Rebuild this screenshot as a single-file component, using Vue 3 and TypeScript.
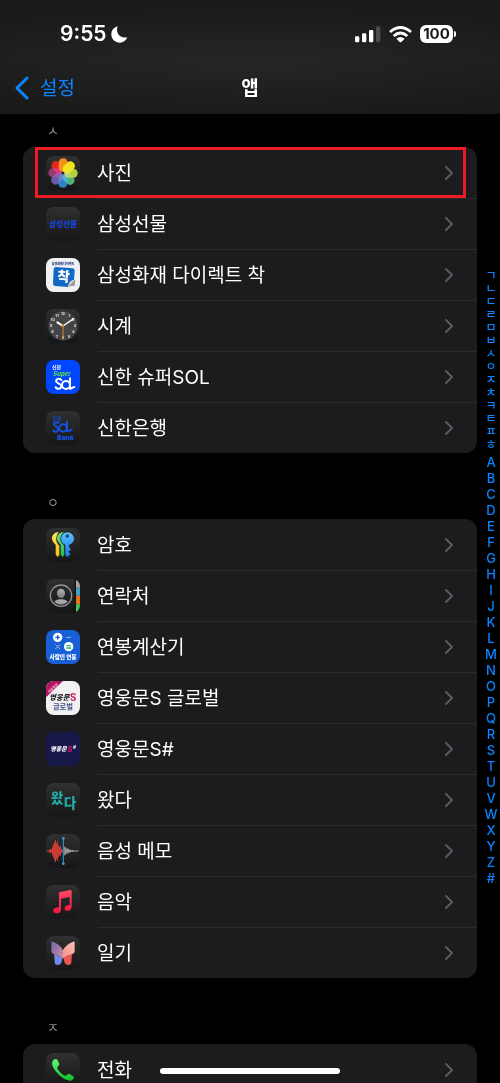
<script setup lang="ts">
interface AppEntry {
  name: string
  icon: string
  highlighted?: boolean
}

interface Section {
  letter: string
  apps: AppEntry[]
}

const sections: Section[] = [
  {
    letter: 'ㅅ',
    apps: [
      { name: '사진', icon: 'photos', highlighted: true },
      { name: '삼성선물', icon: 'futures' },
      { name: '삼성화재 다이렉트 착', icon: 'direct' },
      { name: '시계', icon: 'clock' },
      { name: '신한 슈퍼SOL', icon: 'supersol' },
      { name: '신한은행', icon: 'solbank' },
    ],
  },
  {
    letter: 'ㅇ',
    apps: [
      { name: '암호', icon: 'passwords' },
      { name: '연락처', icon: 'contacts' },
      { name: '연봉계산기', icon: 'salary' },
      { name: '영웅문S 글로벌', icon: 'heroglobal' },
      { name: '영웅문S#', icon: 'herosharp' },
      { name: '왔다', icon: 'watda' },
      { name: '음성 메모', icon: 'voice' },
      { name: '음악', icon: 'music' },
      { name: '일기', icon: 'journal' },
    ],
  },
  {
    letter: 'ㅈ',
    apps: [{ name: '전화', icon: 'phone' }],
  },
]

const hangulIndex = [...'ㄱㄴㄷㄹㅁㅂㅅㅇㅈㅊㅋㅌㅍㅎ']
const latinIndex = [...'ABCDEFGHIJKLMNOPQRSTUVWXYZ#']

const petals = ['#f7901e', '#f3e31d', '#b4d335', '#4fb274', '#2f7fcb', '#6b5cab', '#96396f', '#e3261b']

const clockNumbers = Array.from({ length: 12 }, (_, i) => {
  const angle = ((i + 1) * Math.PI) / 6
  return { label: i + 1, x: Math.round(51 + 36 * Math.sin(angle)), y: Math.round(55 - 36 * Math.cos(angle)) }
})

const redBars = [4, 4, 8, 14, 10, 26, 40, 56, 66, 48, 58, 36, 24, 30, 14, 8]
const whiteBars = [26, 20, 12, 16, 8, 10, 6, 4, 6, 3, 3, 3, 3, 3]

const plainFills: Record<string, string> = {
  direct: '#f1f1f3',
  supersol: '#0046ff',
  salary: '#175fd6',
  heroglobal: '#f1f1f1',
  herosharp: '#18194b',
}

function tileFill(icon: string): string {
  return plainFills[icon] ?? 'url(#tile)'
}
</script>

<template>
  <div class="screen">
    <svg class="defs" aria-hidden="true">
      <defs>
        <linearGradient id="tile" x1="0" y1="0" x2="0" y2="1">
          <stop offset="0" stop-color="#303031" />
          <stop offset="1" stop-color="#161617" />
        </linearGradient>
        <linearGradient id="musicRed" x1="0" y1="0" x2="0" y2="1">
          <stop offset="0" stop-color="#fb4a63" />
          <stop offset="1" stop-color="#fa1340" />
        </linearGradient>
        <linearGradient id="phoneGreen" x1="0" y1="0" x2="0" y2="1">
          <stop offset="0" stop-color="#5ff777" />
          <stop offset="1" stop-color="#0cc12b" />
        </linearGradient>
        <linearGradient id="keyBlue" x1="0" y1="0" x2="0" y2="1">
          <stop offset="0" stop-color="#62bdf8" />
          <stop offset="1" stop-color="#0f7cf0" />
        </linearGradient>
        <linearGradient id="keyGreen" x1="0" y1="0" x2="0" y2="1">
          <stop offset="0" stop-color="#6be07a" />
          <stop offset="1" stop-color="#25b84c" />
        </linearGradient>
        <linearGradient id="keyYellow" x1="0" y1="0" x2="0" y2="1">
          <stop offset="0" stop-color="#ffe25c" />
          <stop offset="1" stop-color="#fbbd13" />
        </linearGradient>
        <linearGradient id="wingLeft" x1="0" y1="0" x2="1" y2="1">
          <stop offset="0" stop-color="#6a67b3" />
          <stop offset="1" stop-color="#d38f9b" />
        </linearGradient>
        <linearGradient id="wingRight" x1="1" y1="0" x2="0" y2="1">
          <stop offset="0" stop-color="#ffc4b4" />
          <stop offset="1" stop-color="#f58d8b" />
        </linearGradient>
        <linearGradient id="person" x1="0" y1="0" x2="0" y2="1">
          <stop offset="0" stop-color="#b0b0b5" />
          <stop offset="1" stop-color="#7b7b80" />
        </linearGradient>
        <clipPath id="tileClip"><rect width="102" height="102" rx="23" /></clipPath>
        <clipPath id="personClip"><circle cx="45" cy="50" r="27" /></clipPath>
      </defs>
    </svg>

    <header class="top">
      <div class="status">
        <div class="clock">
          <span>9:55</span>
          <svg width="17" height="17" viewBox="0 0 51 51" aria-label="방해금지 모드">
            <path d="M20 1C13 20 26 39 49 34C44 45 36 50 27 50C12 50 1 39 1 25C1 14 8 4 20 1Z" fill="#fff" />
          </svg>
        </div>
        <div class="signals">
          <svg width="26" height="17" viewBox="0 0 78 51" aria-label="셀룰러 신호">
            <rect x="0" y="31" width="13" height="18" rx="4" fill="#fff" />
            <rect x="21" y="22" width="13" height="27" rx="4" fill="#fff" />
            <rect x="42" y="12" width="13" height="37" rx="4" fill="#fff" />
            <rect x="63" y="1" width="13" height="48" rx="4" fill="#4c4c4e" />
          </svg>
          <svg width="23" height="17" viewBox="0 0 69 51" aria-label="Wi-Fi">
            <g fill="none" stroke="#fff" stroke-width="8">
              <path d="M3 18Q34 -9 66 18" />
              <path d="M14 30Q34 12 55 30" />
            </g>
            <path d="M22 38Q34 28 47 38L37 48Q34 50 32 48Z" fill="#fff" />
          </svg>
          <div class="battery">
            <span class="level">100</span>
            <span class="cap"></span>
          </div>
        </div>
      </div>
      <nav class="bar">
        <a href="#settings" class="back">
          <svg width="14" height="24" viewBox="0 0 14 24" aria-hidden="true">
            <path d="M12 2L2 12L12 22" fill="none" stroke="#0a84ff" stroke-width="3" stroke-linecap="round" stroke-linejoin="round" />
          </svg>
          <span class="label">설정</span>
        </a>
        <h1 class="label">앱</h1>
      </nav>
    </header>

    <main class="content">
      <section v-for="section in sections" :key="section.letter" class="section">
        <h2>{{ section.letter }}</h2>
        <ul class="card">
          <li v-for="app in section.apps" :key="app.name" :class="{ highlighted: app.highlighted }">
            <a class="row" :href="'#' + app.icon">
              <svg class="icon" viewBox="0 0 102 102" aria-hidden="true">
                <rect width="102" height="102" rx="23" :fill="tileFill(app.icon)" />

                <g v-if="app.icon === 'photos'" class="flower">
                  <rect
                    v-for="(color, i) in petals"
                    :key="color"
                    x="38"
                    y="7"
                    width="27"
                    height="40"
                    rx="13"
                    :fill="color"
                    :transform="`rotate(${i * 45} 51 51)`"
                  />
                </g>

                <text v-else-if="app.icon === 'futures'" x="51" y="60" font-size="23" class="mid black" fill="#1745dc">삼성선물</text>

                <g v-else-if="app.icon === 'direct'">
                  <text x="51" y="21" font-size="9" class="mid black" fill="#18327c">삼성화재 다이렉트</text>
                  <path d="M64 88L88 64L86 84Q76 82 64 88Z" fill="#9b9a98" />
                  <path d="M30 27L80 31Q87 32 86 39L84 66Q70 68 66 87L27 84Q20 83 21 76L23 34Q24 27 30 27Z" fill="#1268c4" />
                  <path d="M84 66Q70 67 66 87Q73 78 84 66Z" fill="#d9d5d0" />
                  <text x="53" y="70" font-size="41" class="mid black" fill="#fff" transform="rotate(4 53 57)">착</text>
                </g>

                <g v-else-if="app.icon === 'clock'">
                  <circle cx="51" cy="51" r="44" fill="#454547" />
                  <text
                    v-for="mark in clockNumbers"
                    :key="mark.label"
                    :x="mark.x"
                    :y="mark.y"
                    font-size="12"
                    class="mid heavy"
                    fill="#dcdcdc"
                  >{{ mark.label }}</text>
                  <path d="M51 51L34 40" stroke="#fff" stroke-width="6" stroke-linecap="round" />
                  <path d="M51 51L83 29" stroke="#fff" stroke-width="4" stroke-linecap="round" />
                  <path d="M51 45V90" stroke="#d68b2d" stroke-width="3" />
                  <circle cx="51" cy="51" r="4" fill="#d68b2d" />
                </g>

                <g v-else-if="app.icon === 'supersol'">
                  <text x="18" y="28" font-size="15" class="heavy" fill="#fff">신한</text>
                  <text x="22" y="47" font-size="18" class="heavy slant" fill="#5be04e">Super</text>
                  <g fill="none" stroke="#fff" stroke-width="6" stroke-linecap="round" stroke-linejoin="round">
                    <path d="M46 60C38 53 28 58 31 65C34 72 46 70 46 79C46 87 34 89 29 82" />
                    <circle cx="60" cy="75" r="12" />
                    <path d="M72 55V86C75 88 81 81 85 81" />
                  </g>
                </g>

                <g v-else-if="app.icon === 'solbank'">
                  <text x="19" y="28" font-size="15" class="heavy" fill="#154ccf">신한</text>
                  <g fill="none" stroke="#1650e3" stroke-width="6" stroke-linecap="round" stroke-linejoin="round">
                    <path d="M37 36C29 30 22 35 24 41C27 48 38 46 37 55C36 63 26 64 22 59" />
                    <circle cx="51" cy="51" r="11" />
                    <path d="M63 32V60C66 63 72 56 77 56" />
                  </g>
                  <text x="58" y="86" font-size="20" class="mid black" fill="#1650e3">Bank</text>
                </g>

                <g v-else-if="app.icon === 'passwords'">
                  <path d="M38 12C24 13 17 23 18 33C19 41 24 46 29 50V80L35 87L40 81V54L32 42C29 34 31 20 38 12Z" fill="url(#keyYellow)" />
                  <path d="M53 12C39 13 32 23 33 33C34 41 39 46 44 50V80L50 87L55 81V54L46 42C43 34 45 20 53 12Z" fill="url(#keyGreen)" />
                  <path d="M64 12C53 12 44 21 44 33C44 41 49 48 57 51V81L64 88L75 78L68 71L76 64L70 57V51C79 48 85 41 85 33C85 21 76 12 64 12Z" fill="url(#keyBlue)" stroke="#1c1c1d" stroke-width="2" />
                  <circle cx="64" cy="24" r="5" fill="#10446e" />
                </g>

                <g v-else-if="app.icon === 'contacts'" clip-path="url(#tileClip)">
                  <path d="M86 0H90V102H86Z" fill="#111" />
                  <path d="M90 0H102V26H90Z" fill="#aaa59b" />
                  <path d="M90 26H102V50H90Z" fill="#409fcb" />
                  <path d="M90 50H102V76H90Z" fill="#e57516" />
                  <path d="M90 76H102V102H90Z" fill="#42c758" />
                  <circle cx="45" cy="50" r="32" fill="none" stroke="#929297" stroke-width="4" />
                  <ellipse cx="45" cy="43" rx="12" ry="14" fill="url(#person)" />
                  <ellipse cx="45" cy="76" rx="24" ry="15" fill="url(#person)" clip-path="url(#personClip)" />
                </g>

                <g v-else-if="app.icon === 'salary'">
                  <circle cx="35" cy="22" r="14" fill="#fff" />
                  <circle cx="68" cy="50" r="14" fill="#fff" />
                  <path d="M28 22H42M35 15V29" stroke="#175fd6" stroke-width="4" />
                  <path d="M61 47H75M61 54H75" stroke="#15b57f" stroke-width="4" />
                  <path d="M61 22H75M28 43L42 57M42 43L28 57" stroke="#a5b7db" stroke-width="3" />
                  <text x="51" y="87" font-size="17" class="mid black" fill="#fff">사람인 연봉</text>
                </g>

                <g v-else-if="app.icon === 'heroglobal'" clip-path="url(#tileClip)">
                  <path d="M0 0H51L0 49Z" fill="#b51661" />
                  <text x="21" y="25" font-size="10" class="mid heavy" fill="#f3c4da" transform="rotate(-44 21 22)">키움증권</text>
                  <text x="10" y="58" font-size="22" class="brush" fill="#161616">영웅문</text>
                  <text x="72" y="59" font-size="29" class="heavy" fill="#cf1260">S</text>
                  <text x="51" y="84" font-size="22" class="mid heavy" fill="#405486">글로벌</text>
                </g>

                <g v-else-if="app.icon === 'herosharp'">
                  <text x="13" y="58" font-size="18" class="brush" fill="#fff">영웅문</text>
                  <text x="64" y="60" font-size="24" class="heavy slant" fill="#d91768">S</text>
                  <text x="81" y="51" font-size="14" class="heavy" fill="#fff">#</text>
                </g>

                <g v-else-if="app.icon === 'watda'" fill="#21a9a5">
                  <text x="14" y="60" font-size="41" class="black">왔</text>
                  <text x="53" y="75" font-size="41" class="black">다</text>
                </g>

                <g v-else-if="app.icon === 'voice'">
                  <rect v-for="(h, i) in redBars" :key="'r' + i" :x="3 + i * 3" :y="51 - h / 2" width="3" :height="h" fill="#c83b36" />
                  <rect v-for="(h, i) in whiteBars" :key="'w' + i" :x="55 + i * 3" :y="51 - h / 2" width="3" :height="h" fill="#b9b9bb" />
                  <path d="M52 13V89" stroke="#32a4dd" stroke-width="3" />
                  <circle cx="52" cy="13" r="4" fill="#32a4dd" />
                  <circle cx="52" cy="89" r="4" fill="#32a4dd" />
                </g>

                <path
                  v-else-if="app.icon === 'music'"
                  d="M39 25Q39 22 42 21L73 15Q77 14 77 18V65C77 73 71 77 65 77C58 77 55 73 56 68C57 62 64 61 71 59V36L45 41V74C45 81 39 85 32 85C25 85 21 81 22 76C23 69 31 68 39 67Z"
                  fill="url(#musicRed)"
                />

                <g v-else-if="app.icon === 'journal'">
                  <path d="M24 54L50 65L46 80Q43 87 35 87Q27 87 26 79Z" fill="#7289ea" />
                  <path d="M78 54L52 65L56 80Q59 87 67 87Q75 87 76 79Z" fill="#ee5552" />
                  <path d="M16 20Q16 15 21 17Q44 26 51 43V67Q36 56 21 53Q16 51 16 46Z" fill="url(#wingLeft)" />
                  <path d="M86 20Q86 15 81 17Q58 26 51 43V67Q66 56 81 53Q86 51 86 46Z" fill="url(#wingRight)" />
                </g>

                <path
                  v-else-if="app.icon === 'phone'"
                  d="M20 24C22 20 26 17 31 18C34 19 40 30 40 34C40 38 33 41 34 45C37 54 48 65 57 68C61 69 64 63 68 63C72 63 82 69 83 72C85 77 79 82 74 83C66 84 54 78 43 69C30 58 20 44 18 33C18 30 19 27 20 24Z"
                  fill="url(#phoneGreen)"
                />
              </svg>
              <span class="name label">{{ app.name }}</span>
              <svg class="chevron" viewBox="0 0 10 16" aria-hidden="true">
                <path d="M2 2L8 8L2 14" fill="none" stroke="#5b5b5f" stroke-width="2" stroke-linecap="round" stroke-linejoin="round" />
              </svg>
            </a>
          </li>
        </ul>
      </section>
    </main>

    <nav class="index" aria-label="색인">
      <a v-for="letter in hangulIndex" :key="letter" class="hangul" :href="'#' + letter">{{ letter }}</a>
      <a v-for="letter in latinIndex" :key="letter" class="latin" :href="'#' + letter">{{ letter }}</a>
    </nav>
    <div class="home"></div>
  </div>
</template>

<style>
body {
  margin: 0;
  background: #000;
}
</style>

<style scoped>
.screen {
  position: relative;
  display: flex;
  flex-direction: column;
  height: 100vh;
  overflow: hidden;
  background: #000;
  color: #fff;
  font-family: Inter, "Noto Sans CJK KR", sans-serif;
}

.defs {
  position: absolute;
  width: 0;
  height: 0;
}

a {
  color: inherit;
  text-decoration: none;
}

.label {
  padding-top: 2px;
  font-size: 19px;
  line-height: 28px;
}

.top {
  flex: none;
  box-sizing: border-box;
  height: 114px;
  padding-top: 20px;
  background:
    radial-gradient(ellipse 70% 60% at 50% 58%, rgba(255, 255, 255, 0.04), transparent),
    linear-gradient(#191919, #1d1d1d 50%, #181818);
}

.status {
  display: flex;
  align-items: center;
  justify-content: space-between;
  height: 28px;
  padding: 0 44px 0 60px;
}

.clock {
  display: flex;
  align-items: center;
  gap: 4px;
  font-size: 21px;
  font-weight: 600;
  line-height: 28px;
}

.signals {
  display: flex;
  align-items: center;
  gap: 8px;
}

.battery {
  display: flex;
  align-items: center;
  gap: 1px;
}

.level {
  width: 33px;
  border-radius: 6px;
  background: #fff;
  color: #1a1a1a;
  font-size: 15px;
  font-weight: 700;
  line-height: 18px;
  text-align: center;
}

.cap {
  width: 2px;
  height: 6px;
  border-radius: 0 2px 2px 0;
  background: #fff;
}

.bar {
  display: grid;
  grid-template-columns: 1fr auto 1fr;
  align-items: center;
  height: 52px;
  margin-top: 14px;
  padding: 0 15px;
}

.back {
  display: flex;
  align-items: center;
  gap: 11px;
  color: #0a84ff;
}

h1 {
  margin: 0;
  font-weight: 700;
}

.content {
  flex: 1;
  min-height: 0;
  overflow-y: auto;
  scrollbar-width: none;
}

.section {
  padding: 0 23px;
}

.section + .section {
  padding-top: 33px;
}

h2 {
  margin: 0;
  padding-left: 24px;
  color: #8e8e93;
  font-size: 13px;
  font-weight: 400;
  line-height: 33px;
}

.card {
  margin: 0;
  padding: 0;
  list-style: none;
  border-radius: 12px;
  background: #1c1c1e;
}

.card li {
  position: relative;
}

.card li + li::before {
  content: "";
  position: absolute;
  top: 0;
  left: 75px;
  right: 0;
  height: 1px;
  background: #2b2b2d;
}

.highlighted::after {
  content: "";
  position: absolute;
  inset: 0 11px 0 12px;
  border: 3px solid #ed1c24;
  pointer-events: none;
}

.row {
  display: flex;
  align-items: center;
  height: 51px;
  padding: 0 23px;
}

.icon {
  flex: none;
  width: 34px;
  height: 34px;
  margin-right: 17px;
}

.name {
  flex: 1;
}

.chevron {
  flex: none;
  width: 10px;
  height: 16px;
}

.flower {
  isolation: isolate;
}

.flower rect {
  mix-blend-mode: lighten;
}

.mid {
  text-anchor: middle;
}

.heavy {
  font-weight: 700;
}

.black {
  font-weight: 900;
}

.slant {
  font-style: italic;
}

.brush {
  font-family: "Noto Sans CJK KR", sans-serif;
  font-style: italic;
  font-weight: 900;
}

.index {
  position: absolute;
  top: 269px;
  right: 0;
  display: flex;
  flex-direction: column;
  width: 18px;
  color: #0a84ff;
  font-weight: 500;
  text-align: center;
}

.hangul {
  font-size: 12px;
  line-height: 13px;
}

.latin {
  font-size: 13px;
  line-height: 16px;
}

.hangul + .latin {
  margin-top: 3px;
}

.home {
  position: absolute;
  bottom: 9px;
  left: 50%;
  width: 36%;
  height: 6px;
  border-radius: 3px;
  background: #fff;
  transform: translateX(-50%);
}
</style>
